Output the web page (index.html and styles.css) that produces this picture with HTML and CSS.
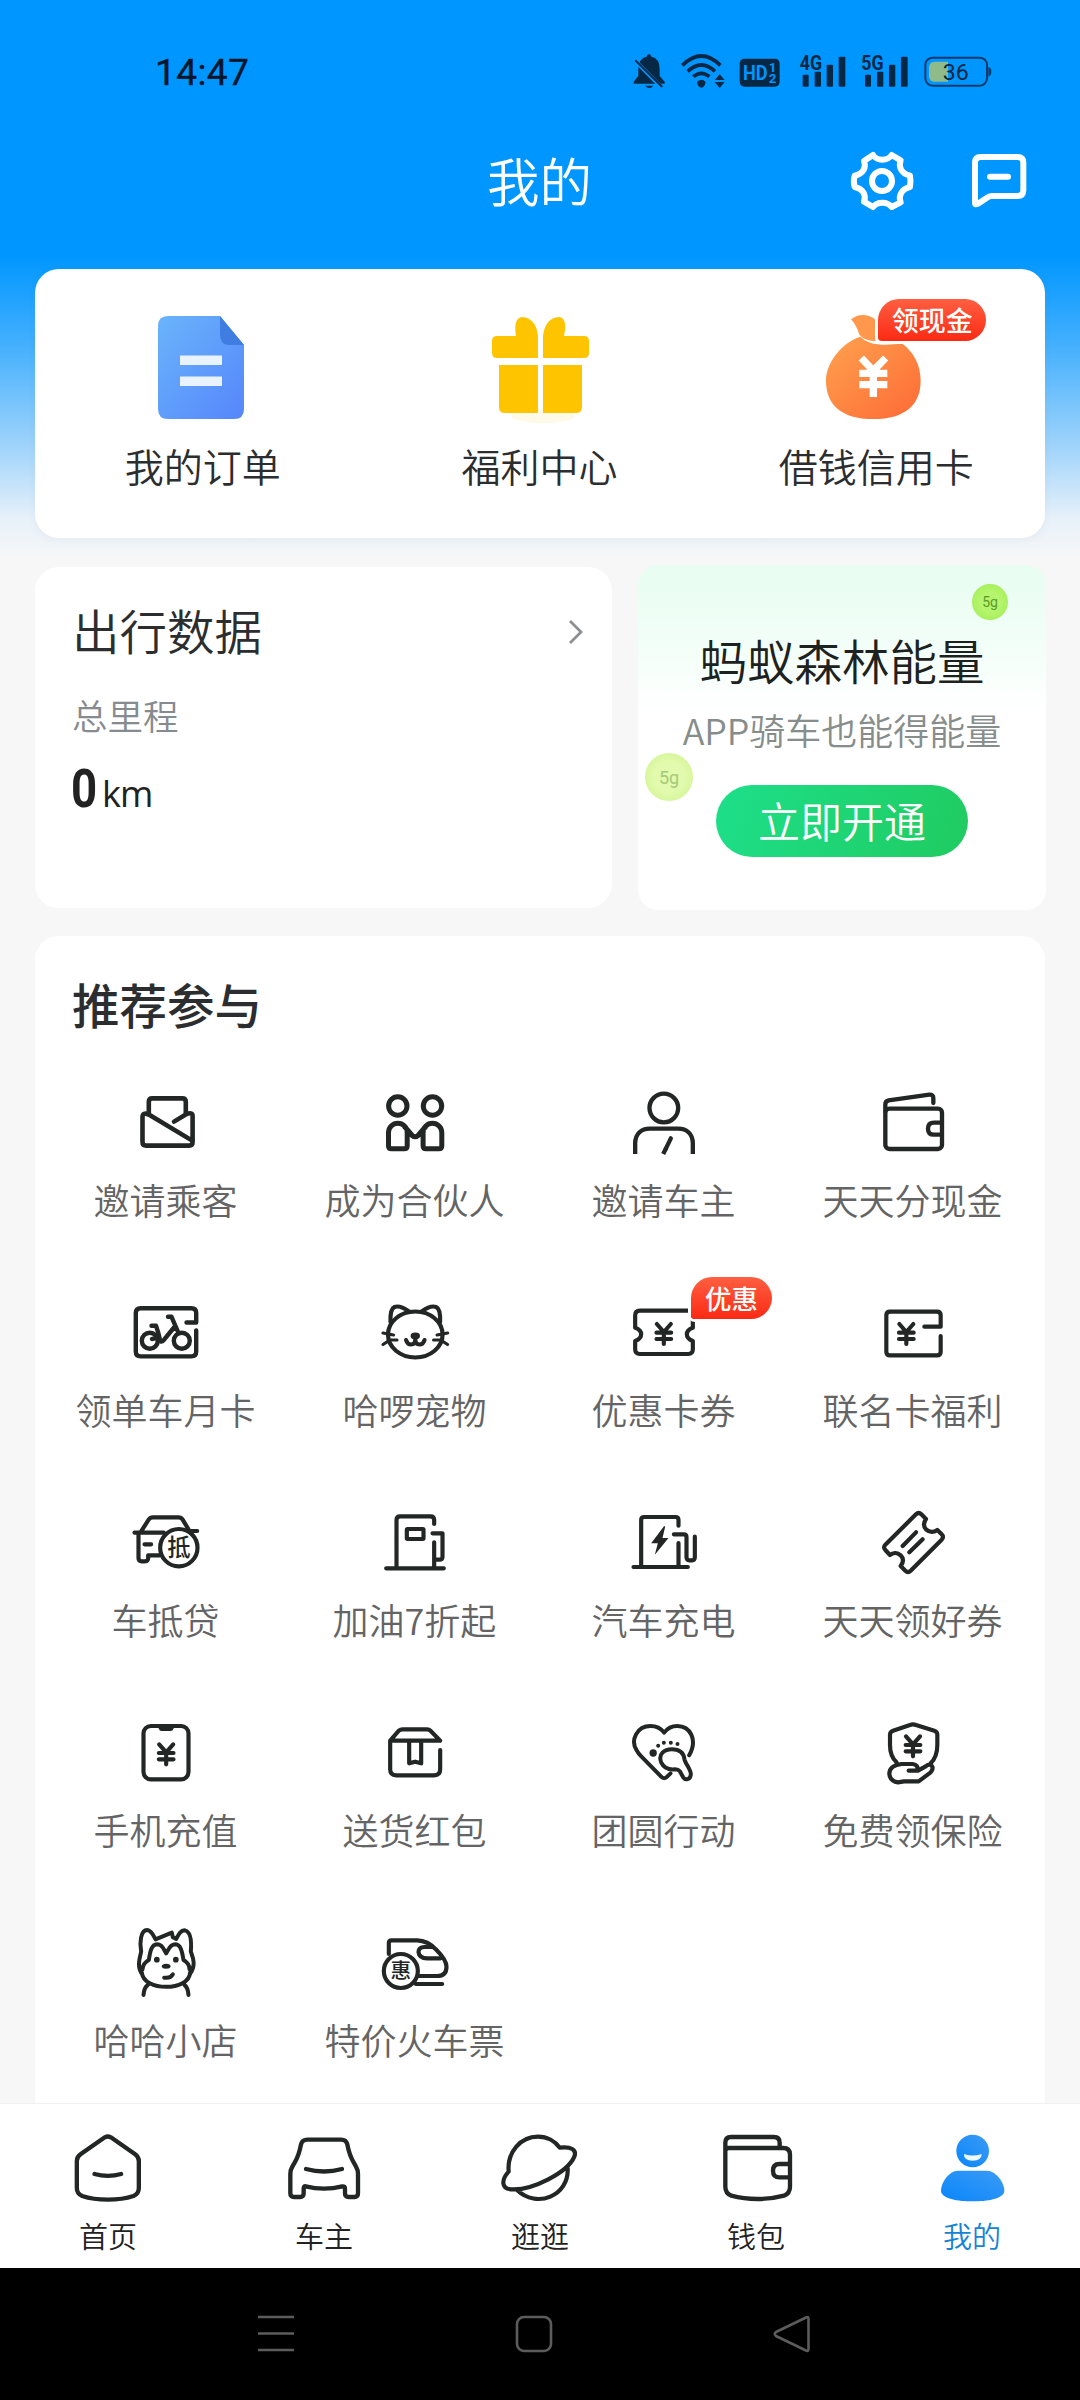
FILE: index.html
```html
<!DOCTYPE html>
<html lang="zh-CN">
<head>
<meta charset="utf-8">
<title>我的</title>
<link rel="stylesheet" href="styles.css">
</head>
<body>
<svg class="defs" aria-hidden="true">
  <defs>
    <linearGradient id="docFill" x1="0" y1="0" x2="1" y2="1"><stop offset="0" stop-color="#6ab4fb"/><stop offset="1" stop-color="#5586fb"/></linearGradient>
    <linearGradient id="bagFill" x1="0" y1="0" x2="1" y2="1"><stop offset="0" stop-color="#ffa24f"/><stop offset="1" stop-color="#fd6a35"/></linearGradient>
    <linearGradient id="meFill" x1="1" y1="0" x2="0" y2="1"><stop offset="0" stop-color="#3b9bf5"/><stop offset="1" stop-color="#0a86fb"/></linearGradient>
    <symbol id="yen" viewBox="0 0 60 80" overflow="visible"><path d="M9 12 30 36 51 12M8 38H52M8 57H52M30 36V72"/></symbol>
  </defs>
</svg>
<div class="screen">
  <div class="hero">
    <div class="status">
      <span class="clock">14:47</span>
      <div class="status-icons">
        <svg width="38.3" height="36" viewBox="60 40 115 108"><g fill="#062844"><path d="M117 44q6 0 7 7 25 5 25 36v22l15 17v6H71v-6l14-17V87q1-31 25-36 1-7 7-7z"/><path d="M106 138h23q-2 7-11 7t-12-7z"/></g><path d="M72 60 158 147" stroke="#0096ff" stroke-width="12"/><path d="M76 62 157 142" stroke="#062844" stroke-width="6"/></svg>
        <svg width="50" height="36" viewBox="205 40 150 108"><g fill="none" stroke="#062844" stroke-width="11"><path d="M218 77q57-56 114 0M234 95q41-38 82 0M251 111q24-20 48 0"/></g><path fill="#062844" d="M262 127q13-13 26 0-2 16-13 17-11-1-13-17zM315 121l15-17 15 17zM315 127l15 18 15-18z"/></svg>
        <svg width="43.3" height="36" viewBox="385 40 130 108"><rect x="390" y="57" width="120" height="84" rx="14" fill="#062844"/><text class="hd" x="400" y="122" textLength="74" lengthAdjust="spacingAndGlyphs">HD</text><text class="hd-sub" x="477" y="97">1</text><text class="hd-sub" x="477" y="131">2</text></svg>
        <svg width="56.7" height="36" viewBox="545 40 170 108"><g fill="#062844"><rect x="577" y="105" width="18" height="36" rx="3"/><rect x="613" y="96" width="19" height="45" rx="3"/><rect x="649" y="75" width="19" height="66" rx="3"/><rect x="685" y="51" width="20" height="90" rx="3"/></g><text class="net" x="568" y="90" textLength="67" lengthAdjust="spacingAndGlyphs">4G</text></svg>
        <svg width="53.3" height="36" viewBox="745 40 160 108"><g fill="#062844"><rect x="766" y="105" width="18" height="36" rx="3"/><rect x="802" y="96" width="19" height="45" rx="3"/><rect x="838" y="75" width="19" height="66" rx="3"/><rect x="874" y="51" width="20" height="90" rx="3"/></g><text class="net" x="755" y="90" textLength="67" lengthAdjust="spacingAndGlyphs">5G</text></svg>
        <svg width="71.7" height="36" viewBox="935 40 215 108"><rect x="945" y="54" width="185" height="84" rx="22" fill="none" stroke="#0b3a6b" stroke-width="6"/><path d="M1013 66H974q-18 0-18 18v24q0 18 18 18h39z" fill="#8fbb8a"/><path d="M1134 82q9 2 9 14t-9 15z" fill="#0b3a6b"/><text class="charge" x="1036" y="121" textLength="78" lengthAdjust="spacingAndGlyphs">36</text></svg>
      </div>
    </div>
    <header class="titlebar">
      <h1>我的</h1>
      <div class="actions">
        <svg width="72" height="72" viewBox="707 315 216 216" fill="none" stroke="#fff" stroke-width="18" stroke-linejoin="round"><path d="M788 345q9 14 28 14t28-14l27 16c-7 18 0 39 28 46q3 17 0 34c-28 7-35 28-28 46l-27 14q-9-13-28-13t-28 13l-27-16c7-18 0-37-28-44q-5-17 0-34c28-7 35-26 28-44z"/><circle cx="815" cy="423" r="30"/></svg>
        <svg width="72" height="72" viewBox="1059 315 216 216" fill="none" stroke="#fff" stroke-width="18" stroke-linecap="round" stroke-linejoin="round"><path d="M1095 489V368q0-17 17-17h111q17 0 17 17v83q0 17-17 17h-78q-8 0-15 6l-26 17q-9 5-9-2zM1140 410h54"/></svg>
      </div>
    </header>
    <section class="card shortcuts">
      <a class="shortcut">
        <svg width="110" height="110" viewBox="0 0 110 110"><path d="M18 4H72L96 33V97q0 10-10 10H20q-10 0-10-10V14q0-10 10-10z" fill="url(#docFill)"/><path d="M72 4 96 33H82q-10 0-10-10z" fill="#3f7de0"/><path d="M32 43.500H74V53H32zM32 64.500H74V74H32z" fill="#e8f3ff"/></svg>
        <span>我的订单</span>
      </a>
      <a class="shortcut">
        <svg width="110" height="110" viewBox="0 0 110 110"><ellipse cx="58" cy="104" rx="32" ry="7" fill="#fff9e8"/><g fill="#ffc400"><path d="M53 46H12q-5 0-5-5V29q0-5 5-5H31Q28 6 37 5q14 1 16 19zM58 46H99q5 0 5-5V29q0-5-5-5H79Q83 6 74 5 60 6 58 24zM14 53H53v48H20q-6 0-6-6zM58 53H97V95q0 6-6 6H58z"/></g></svg>
        <span>福利中心</span>
      </a>
      <a class="shortcut">
        <svg width="110" height="110" viewBox="636 816 330 330"><path d="M752 890C700 905 648 965 648 1022c0 70 44 115 142 115s142-45 142-115c0-47-22-87-57-112-60 10-105 2-123-20z" fill="url(#bagFill)"/><path d="M723 838c22-18 52-18 74 2v63q-32 0-49-19c-6-18-12-32-25-46z" fill="#ff984d"/><path d="M754 954 790 992 827 954M748 1000h84M748 1034h84M790 992v79" fill="none" stroke="#fff" stroke-width="22"/></svg>
        <span>借钱信用卡</span>
        <b class="badge badge-cash">领现金</b>
      </a>
    </section>
  </div>

  <div class="pair">
    <section class="card trip">
      <div class="trip-head"><h2>出行数据</h2><svg width="16" height="26" viewBox="0 0 16 26"><path d="M2 2 13 13 2 24" fill="none" stroke="#8b8f94" stroke-width="2.800"/></svg></div>
      <p class="trip-label">总里程</p>
      <p class="trip-value"><b>0</b><span>km</span></p>
    </section>
    <section class="card forest">
      <i class="ball ball-a">5g</i>
      <i class="ball ball-b">5g</i>
      <h2>蚂蚁森林能量</h2>
      <p>APP骑车也能得能量</p>
      <a class="open">立即开通</a>
    </section>
  </div>

  <section class="recommend">
    <h2>推荐参与</h2>
    <div class="grid">
      <a class="tile"><svg viewBox="0 0 80 80" stroke-width="4.600"><path d="M22.800 32V20q0-3.600 3.600-3.600H56.200q3.600 0 3.600 3.600V32M22.800 32.500q-6.300-2.600-6.300 2.500V60q0 3.600 3.600 3.600H63q3.600 0 3.600-3.600V34q0-4.500-6.800-1.500L48 39.600M22.800 32.500 66.200 58.600"/></svg><span>邀请乘客</span></a>
      <a class="tile"><svg viewBox="0 0 80 80" stroke-width="5"><circle cx="22.800" cy="24" r="9.200"/><circle cx="57.500" cy="24" r="9.200"/><path d="M16.500 66.800q-3 0-3-3V50.700a9.300 9.300 0 0 1 18.700 0V63.800q0 3-3 3zM63.800 66.800q3 0 3-3V50.700a9.300 9.300 0 0 0-18.700 0V63.800q0 3 3 3zM29.500 44.500 37.200 53.500q2.900 2.500 5.800 0L50.800 44.500"/></svg><span>成为合伙人</span></a>
      <a class="tile"><svg viewBox="250.500 96 240 240" stroke-width="13"><circle cx="370" cy="174" r="43"/><path stroke-linecap="butt" d="M284 312V280c0-28 18-44 44-44h85c26 0 44 16 44 44v32M368 312 377 294"/><path d="M376 296 391 265"/></svg><span>邀请车主</span></a>
      <a class="tile"><svg viewBox="999 96 240 240" stroke-width="13"><rect x="1036" y="176" width="170" height="121" rx="12"/><path d="M1036 184V163q0-10 10-12L1168 134q12-1 12 10V159M1206 218H1182q-18 0-18 18t18 18H1206"/></svg><span>天天分现金</span></a>

      <a class="tile"><svg viewBox="0 0 80 80" stroke-width="4.400"><path d="M60.500 30.500H70.200V21q0-4.800-4.800-4.800H14.600q-4.800 0-4.800 4.800V59.600q0 4.800 4.800 4.800H65.400q4.800 0 4.800-4.800V38.500"/><circle cx="23.800" cy="48.700" r="8"/><circle cx="55.800" cy="48.700" r="8"/><path d="M25.500 33.700H30q2.500 7 3.700 13 .5 5 4 1.500L48 35.500M42 24.800h3.500L52.500 41M26 47q5-2 8 1"/></svg><span>领单车月卡</span></a>
      <a class="tile"><svg viewBox="0 0 80 80" stroke-width="4.200"><ellipse cx="40.300" cy="42.500" rx="27.300" ry="23"/><path d="M15.500 30Q15 17 19.500 15 25 13 34 19.500M65.100 30Q65.600 17 61.100 15 55.600 13 46.600 19.500"/><path stroke-width="3.200" d="M8 41 18.500 43M8 52.500 15 48H22M72.600 41 62.100 43M72.600 52.500 65.600 48H58.600"/><path stroke-width="4" d="M31 48q1.500 4.500 5 4.500 4.300 0 4.300-5.500 0 5.500 4.300 5.500 3.500 0 5-4.500"/><ellipse cx="40.300" cy="44" rx="2.600" ry="1.300"/></svg><span>哈啰宠物</span></a>
      <a class="tile"><svg viewBox="250.500 726 240 240" stroke-width="12.500"><path d="M284 833V796q0-14 14-14H443q14 0 14 14v37c-24 8-24 32 0 40v25q0 14-14 14H298q-14 0-14-14V873c24-8 24-32 0-40z"/><use href="#yen" x="340" y="810" width="60" height="80"/></svg><span>优惠卡券</span><b class="badge badge-deal">优惠</b></a>
      <a class="tile"><svg viewBox="999 726 240 240" stroke-width="12.500"><path d="M1153 830H1202V796q0-11-11-11H1050q-11 0-11 11V905q0 11 11 11H1191q11 0 11-11V858"/><use href="#yen" x="1069" y="810" width="60" height="80"/></svg><span>联名卡福利</span></a>

      <a class="tile"><svg viewBox="256.500 66 240 240" stroke-width="12.500"><path d="M282 158H370M302 154 325 118q4-6 12-6H414q8 0 12 6L444 148M452 153H470M294 165V234q0 10 10 10H313q10 0 10-10V226H358M312 193H332"/><circle cx="415" cy="203" r="56"/><text x="415" y="229" font-size="70">抵</text></svg><span>车抵贷</span></a>
      <a class="tile"><svg viewBox="1003.500 66 240 240" stroke-width="12.500"><path d="M1037 265H1210M1068 265V120q0-11 11-11H1170q11 0 11 11V132M1181 187V265M1176 160H1206V230q0 9-9 9H1186"/><rect x="1099" y="147" width="50" height="30" rx="2"/></svg><span>加油7折起</span></a>
      <a class="tile"><svg viewBox="250.500 66 240 240" stroke-width="12.500"><path d="M279 261H442M302 261V120q0-9 9-9H405q9 0 9 9V137M414 189V261M400 163H430q8 0 8 8V232q0 9 9 9H455q8 0 8-9V170"/><path class="solid" d="M371 138 332 190H352L343 224 384 174H366L374 140z"/></svg><span>汽车充电</span></a>
      <a class="tile"><svg viewBox="999 66 240 240" stroke-width="12.500"><path d="M1128 103q8-8 16 0L1158 117C1149 130 1150 140 1159 149 1168 157 1180 158 1192 150L1205 163q8 8 0 16L1112 272q-8 8-16 0L1082 258C1092 245 1090 234 1082 226 1073 218 1060 216 1050 225L1036 210q-8-8 0-16zM1088 198 1128 157M1108 217 1148 178"/></svg><span>天天领好券</span></a>

      <a class="tile"><svg viewBox="256.500 696 240 240" stroke-width="12.500"><rect x="309" y="738" width="135" height="160" rx="22"/><path class="solid" d="M345 738q8 0 10 8 2 7 8 7H390q7 0 9-7 2-8 10-8z"/><use href="#yen" x="347" y="781" width="60" height="80"/></svg><span>手机充值</span></a>
      <a class="tile"><svg viewBox="1003.500 696 240 240" stroke-width="12.500"><path d="M1049 782 1075 752q5-4 11-4H1160q6 0 10 4L1199 782H1049V868q0 18 18 18H1181q18 0 18-18V810M1106 786V850L1124 845 1142 850V786"/></svg><span>送货红包</span></a>
      <a class="tile"><svg viewBox="250.500 696 240 240" stroke-width="12"><path d="M446 826C472 780 450 738 410 738 392 738 380 746 371 758 362 746 348 738 330 738 290 738 268 780 289 812 293 820 298 825 303 830L362 890q9 9 18 0L390 880"/><path d="M362 847C352 822 372 808 394 808 420 808 430 822 432 838 434 850 452 870 451 883 450 900 434 901 428 892L418 874q-5-6-14-6C386 870 370 864 362 847z"/><g class="solid"><circle cx="338" cy="819" r="11"/><circle cx="353" cy="797" r="6"/><circle cx="370" cy="788" r="6"/><circle cx="391" cy="788" r="6"/><circle cx="411" cy="792" r="6"/></g></svg><span>团圆行动</span></a>
      <a class="tile"><svg viewBox="999 696 240 240" stroke-width="12.500"><path d="M1069 846C1054 832 1050 812 1050 795V764q0-9 9-12L1110 735q9-4 18 0L1183 752q9 3 9 12V795C1192 820 1184 838 1172 850M1106 872H1132Q1136 854 1118 852H1085Q1048 856 1048 882 1050 904 1074 907L1092 904H1136L1172 877Q1182 864 1175 857 1168 850 1157 859L1134 872"/><use href="#yen" x="1089" y="757" width="60" height="80"/></svg><span>免费领保险</span></a>

      <a class="tile"><svg viewBox="256.500 126 240 240" stroke-width="12"><path d="M305 283C288 260 298 232 302 215 297 190 300 150 320 150 333 151 340 168 345 178L394 158 397 172 407 177C414 164 420 150 433 151 452 155 453 190 451 215 457 232 468 255 448 283M304 277C308 335 446 335 449 277M306 268Q307 250 325 240C329 215 332 194 350 193 367 193 370 210 377 220 384 210 387 193 405 193 421 194 425 215 429 240Q447 250 447 268M371 293Q390 296 397 283M309 345Q311 322 322 315M444 345Q442 322 432 315"/><g class="solid"><circle cx="349" cy="239" r="8.500"/><circle cx="406" cy="239" r="8.500"/><ellipse cx="377" cy="259" rx="13" ry="7.500"/></g></svg><span>哈哈小店</span></a>
      <a class="tile"><svg viewBox="1003.500 126 240 240" stroke-width="12.500"><path d="M1045 222V189q0-8 8-8H1130Q1162 182 1186 208 1218 240 1218 260 1218 288 1190 288H1136M1175 201H1152Q1134 202 1134 216 1136 235 1160 235H1200M1126 312H1205"/><circle cx="1081" cy="273" r="51"/><text x="1081" y="295" font-size="62">惠</text></svg><span>特价火车票</span></a>
    </div>
  </section>

  <nav class="tabs">
    <a><svg width="80" height="80" viewBox="24.500 52 240 240" stroke-width="13"><path d="M135 80q9-5 18 0L226 131q11 8 11 20V232q0 17-16 24Q188 267 144 267T67 256Q51 249 51 232V151q0-12 11-20zM104 190Q144 201 184 190"/></svg><span>首页</span></a>
    <a><svg width="80" height="80" viewBox="672 52 240 240" stroke-width="13"><path d="M742 87H844q14 0 18 14C870 145 880 150 888 168q6 10 6 22v58q0 11-11 11H866q-11 0-11-11V234q0-8-8-7Q792 241 737 227q-6-1-6 7v14q0 11-11 11H702q-11 0-11-11V190q0-12 6-22C706 150 715 145 723 101q4-14 19-14zM738 175Q792 190 846 175"/></svg><span>车主</span></a>
    <a><svg width="80" height="80" viewBox="1322 52 240 240" stroke-width="12.500"><path d="M1348 183C1343 125 1383 78 1436 78 1464 78 1488 92 1501 111 1535 107 1553 117 1545 138 1525 185 1420 240 1355 236 1325 234 1326 206 1348 183zM1373 238C1432 295 1530 256 1525 172"/></svg><span>逛逛</span></a>
    <a><svg width="80" height="80" viewBox="78 52 240 240" stroke-width="13"><path d="M106 118V96q0-17 17-17H252q17 0 17 17V112M106 120q2-8 10-8H280q20 0 20 20V228q0 20-18 27Q245 265 203 265T124 255Q106 248 106 228zM299 160H268q-19 0-19 20t19 20H299"/></svg><span>钱包</span></a>
    <a class="active"><svg width="80" height="80" viewBox="726 52 240 240"><g fill="url(#meFill)" stroke="none"><circle cx="848" cy="121" r="49"/><path d="M805 180H890C920 180 943 218 943 240 943 264 890 272 848 272S753 264 753 240C753 218 775 180 805 180z"/></g><path d="M822 130Q848 139 875 130 875 150 848 150T822 130z" fill="#eef8ff" stroke="none"/></svg><span>我的</span></a>
  </nav>
  <div class="sysnav">
    <svg width="38" height="38" viewBox="0 0 38 38"><path d="M1 2H37M1 18.500H37M1 35H37"/></svg>
    <svg width="38" height="38" viewBox="0 0 38 38"><rect x="2" y="2" width="34" height="34" rx="7"/></svg>
    <svg width="38" height="38" viewBox="0 0 38 38"><path d="M33 2.500Q35.500 1 35.500 4V34Q35.500 37 33 35.500L3 21Q.5 19 3 17z"/></svg>
  </div>
</div>
</body>
</html>
```
FILE: styles.css
```css
* { box-sizing: border-box; margin: 0; padding: 0; }
body {
  width: 1080px;
  background: #f7f7f7;
  color: #2b2d2f;
  font-family: "Noto Sans CJK SC DemiLight", "Noto Sans CJK SC", sans-serif;
  font-weight: 350;
}
h1, h2 { font-weight: 350; }
.defs { position: absolute; width: 0; height: 0; }
.screen { width: 1080px; height: 2400px; display: flex; flex-direction: column; overflow: hidden; }
svg { display: block; flex: none; overflow: visible; }

/* Header */
.hero {
  height: 565px;
  padding: 0 35px;
  background: linear-gradient(#0096ff 0, #0096ff 255px, #44b0fd 345px, #9ed3fb 445px, #e8f1f9 520px, #f7f7f7 560px);
}
.status { height: 110px; padding: 53px 54px 21px 120px; display: flex; align-items: center; justify-content: space-between; }
.clock { font: 400 37px/36px "Roboto", sans-serif; color: #03162b; letter-spacing: .4px; padding-top: 4px; -webkit-text-stroke: .4px #03162b; }
.status-icons { display: flex; gap: 10px; margin-right: -19px; width: 380px; }
.hd { font: 700 58px "Roboto", sans-serif; fill: #0096ff; }
.hd-sub { font: 700 40px "Roboto", sans-serif; fill: #0096ff; }
.net { font: 700 60px "Roboto", sans-serif; fill: #062844; }
.charge { font: 400 68px "Roboto", sans-serif; fill: #04263f; text-anchor: middle; }
.titlebar { height: 159px; display: grid; grid-template-columns: 1fr auto 1fr; align-items: start; padding: 35px 10px 0 0; }
.titlebar h1 { grid-column: 2; font-size: 52.500px; line-height: 69px; color: #fff; margin-left: 9px; }
.actions { display: flex; gap: 45.500px; justify-self: end; }

.card { background: #fff; border-radius: 24px; }
.shortcuts { height: 269px; display: grid; grid-template-columns: repeat(3, 1fr); padding-top: 43px; box-shadow: 0 3px 8px rgba(70, 110, 150, .06); }
.shortcut { position: relative; display: flex; flex-direction: column; align-items: center; gap: 13px; }
.shortcut span { font-size: 39px; line-height: 60px; margin-left: -1px; }
.badge {
  position: absolute;
  display: flex;
  align-items: center;
  justify-content: center;
  color: #fff;
  font-family: "Noto Sans CJK SC", sans-serif;
  font-weight: 500;
  background: linear-gradient(#ff5f41, #fb2a14);
  border-radius: 22px 22px 22px 4px;
  box-shadow: 0 0 0 3px #fff;
  padding-bottom: 2px;
}
.badge-cash { left: 170px; top: -13px; width: 108px; height: 42px; font-size: 27px; }
.badge-deal { left: 152px; top: -15px; width: 81px; height: 42px; font-size: 26.500px; }

/* Trip data and forest energy */
.pair { display: grid; grid-template-columns: 577px 408px; gap: 26px; padding-left: 35px; height: 345px; }
.trip { height: 341px; margin-top: 2px; padding: 28px 28px 0 37px; }
.trip-head { display: flex; align-items: center; justify-content: space-between; height: 72px; }
.trip-head h2 { font-size: 47.500px; line-height: 72px; padding-bottom: 2px; }
.trip-head svg { margin-top: 2px; }
.trip-label { font-size: 35.500px; line-height: 54px; color: #868b90; margin-top: 21px; }
.trip-value { display: flex; align-items: baseline; gap: 6px; margin-top: 11px; line-height: 72px; color: #222; }
.trip-value b { font: 700 53px/72px "Roboto", sans-serif; width: 24px; margin-left: -1px; transform: scaleX(.86); transform-origin: left; }
.trip-value span { font-size: 36px; font-family: "Open Sans", sans-serif; font-weight: 400; letter-spacing: -1px; padding-left: 1px; }
.forest {
  position: relative;
  display: flex;
  flex-direction: column;
  align-items: center;
  padding-top: 60px;
  background: linear-gradient(#e8fdf1 0, #effef6 60px, #fff 150px);
  border-radius: 20px;
}
.forest h2 { font-size: 47.500px; line-height: 70px; color: #1d2220; }
.forest p { font-size: 36px; line-height: 52px; color: #868d8b; margin-top: 8px; }
.open {
  margin-top: 30px;
  width: 252px;
  height: 72px;
  border-radius: 36px;
  background: linear-gradient(110deg, #1ddf8a, #20cb60);
  color: #fff;
  font-size: 42px;
  line-height: 69px;
  text-align: center;
}
.ball { position: absolute; display: flex; align-items: center; justify-content: center; border-radius: 50%; font: 400 14px "Roboto", sans-serif; color: #5c9a2c; }
.ball-a { left: 334px; top: 19px; width: 36px; height: 36px; background: radial-gradient(#b5f56c 40%, #a6ef5a 75%, #c9f59c); }
.ball-b { left: 7px; top: 188px; width: 48px; height: 48px; font-size: 18px; color: #a7c878; background: radial-gradient(#e2faad 45%, #d3f596 80%, #e6facb); }

/* Recommendations */
.recommend { margin: 26px 35px 0; height: 1167px; background: #fff; border-radius: 24px 24px 0 0; padding: 32px 8px 0 6px; }
.recommend h2 { font-size: 47.500px; line-height: 72px; font-family: "Noto Sans CJK SC", sans-serif; font-weight: 500; margin-left: 31px; }
.grid { display: grid; grid-template-columns: repeat(4, 249px); grid-auto-rows: 210px; padding-top: 42px; }
.tile { position: relative; display: flex; flex-direction: column; align-items: center; gap: 10px; }
.tile svg { width: 80px; height: 80px; fill: none; stroke: #222625; stroke-linecap: round; stroke-linejoin: round; }
.tile svg .solid, .tile svg text { fill: #222625; stroke: none; }
.tile svg text { font-family: "Noto Sans CJK SC", sans-serif; font-weight: 500; text-anchor: middle; }
.tile > span { font-size: 36px; line-height: 54px; color: #646464; white-space: nowrap; }

/* Tab bar */
.tabs { height: 165px; background: #fff; border-top: 1px solid #f0f0f0; display: grid; grid-template-columns: repeat(5, 1fr); padding-top: 24px; }
.tabs a { display: flex; flex-direction: column; align-items: center; gap: 5px; }
.tabs svg { fill: none; stroke: #222625; stroke-linecap: round; stroke-linejoin: round; }
.tabs span { font-size: 29px; line-height: 44px; color: #222; }
.tabs .active span { color: #1684d6; }
.sysnav { height: 132px; background: #000; display: flex; justify-content: center; align-items: center; gap: 220px; padding-right: 12px; }
.sysnav svg { fill: none; stroke: #5c5c5c; stroke-width: 2.6; stroke-linejoin: round; }
```
